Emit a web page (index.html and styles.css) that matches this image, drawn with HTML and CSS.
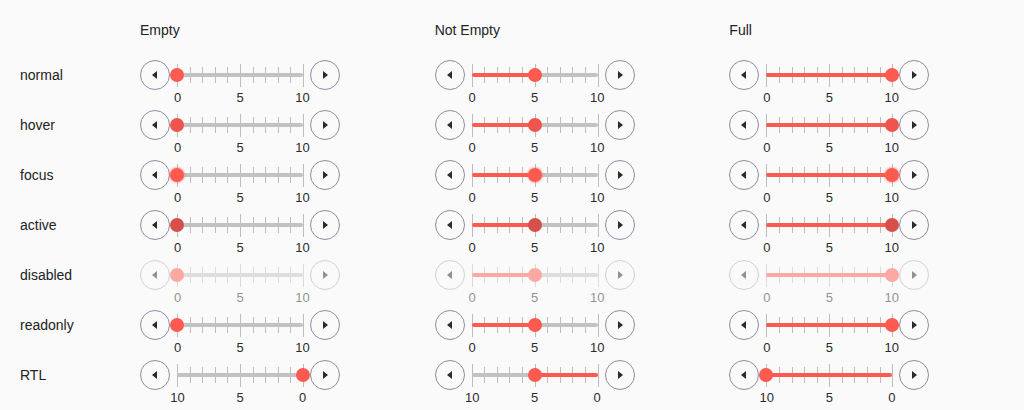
FILE: index.html
```html
<!DOCTYPE html>
<html>
<head>
<meta charset="utf-8">
<link rel="stylesheet" href="styles.css">
</head>
<body>
<div class="page">
  <div class="head"></div>
  <div class="head">Empty</div>
  <div class="head">Not Empty</div>
  <div class="head">Full</div>

  <!-- normal -->
  <div class="label">normal</div>
  <div class="cell"><div class="slider"><button class="btn"><svg viewBox="0 0 10 10"><polygon points="7,1 7,9 2,5"/></svg></button><div class="rail"><div class="ticks"><i class="major"></i><i></i><i></i><i></i><i></i><i class="major"></i><i></i><i></i><i></i><i></i><i class="major"></i></div><div class="track"></div><div class="fill" style="left:0%;width:0%"></div><div class="thumb" style="left:0%"></div><div class="nums"><span>0</span><span>5</span><span>10</span></div></div><button class="btn"><svg viewBox="0 0 10 10"><polygon points="3,1 3,9 8,5"/></svg></button></div></div>
  <div class="cell"><div class="slider"><button class="btn"><svg viewBox="0 0 10 10"><polygon points="7,1 7,9 2,5"/></svg></button><div class="rail"><div class="ticks"><i class="major"></i><i></i><i></i><i></i><i></i><i class="major"></i><i></i><i></i><i></i><i></i><i class="major"></i></div><div class="track"></div><div class="fill" style="left:0%;width:50%"></div><div class="thumb" style="left:50%"></div><div class="nums"><span>0</span><span>5</span><span>10</span></div></div><button class="btn"><svg viewBox="0 0 10 10"><polygon points="3,1 3,9 8,5"/></svg></button></div></div>
  <div class="cell"><div class="slider"><button class="btn"><svg viewBox="0 0 10 10"><polygon points="7,1 7,9 2,5"/></svg></button><div class="rail"><div class="ticks"><i class="major"></i><i></i><i></i><i></i><i></i><i class="major"></i><i></i><i></i><i></i><i></i><i class="major"></i></div><div class="track"></div><div class="fill" style="left:0%;width:100%"></div><div class="thumb" style="left:100%"></div><div class="nums"><span>0</span><span>5</span><span>10</span></div></div><button class="btn"><svg viewBox="0 0 10 10"><polygon points="3,1 3,9 8,5"/></svg></button></div></div>

  <!-- hover -->
  <div class="label">hover</div>
  <div class="cell"><div class="slider hover"><button class="btn"><svg viewBox="0 0 10 10"><polygon points="7,1 7,9 2,5"/></svg></button><div class="rail"><div class="ticks"><i class="major"></i><i></i><i></i><i></i><i></i><i class="major"></i><i></i><i></i><i></i><i></i><i class="major"></i></div><div class="track"></div><div class="fill" style="left:0%;width:0%"></div><div class="thumb" style="left:0%"></div><div class="nums"><span>0</span><span>5</span><span>10</span></div></div><button class="btn"><svg viewBox="0 0 10 10"><polygon points="3,1 3,9 8,5"/></svg></button></div></div>
  <div class="cell"><div class="slider hover"><button class="btn"><svg viewBox="0 0 10 10"><polygon points="7,1 7,9 2,5"/></svg></button><div class="rail"><div class="ticks"><i class="major"></i><i></i><i></i><i></i><i></i><i class="major"></i><i></i><i></i><i></i><i></i><i class="major"></i></div><div class="track"></div><div class="fill" style="left:0%;width:50%"></div><div class="thumb" style="left:50%"></div><div class="nums"><span>0</span><span>5</span><span>10</span></div></div><button class="btn"><svg viewBox="0 0 10 10"><polygon points="3,1 3,9 8,5"/></svg></button></div></div>
  <div class="cell"><div class="slider hover"><button class="btn"><svg viewBox="0 0 10 10"><polygon points="7,1 7,9 2,5"/></svg></button><div class="rail"><div class="ticks"><i class="major"></i><i></i><i></i><i></i><i></i><i class="major"></i><i></i><i></i><i></i><i></i><i class="major"></i></div><div class="track"></div><div class="fill" style="left:0%;width:100%"></div><div class="thumb" style="left:100%"></div><div class="nums"><span>0</span><span>5</span><span>10</span></div></div><button class="btn"><svg viewBox="0 0 10 10"><polygon points="3,1 3,9 8,5"/></svg></button></div></div>

  <!-- focus -->
  <div class="label">focus</div>
  <div class="cell"><div class="slider focus"><button class="btn"><svg viewBox="0 0 10 10"><polygon points="7,1 7,9 2,5"/></svg></button><div class="rail"><div class="ticks"><i class="major"></i><i></i><i></i><i></i><i></i><i class="major"></i><i></i><i></i><i></i><i></i><i class="major"></i></div><div class="track"></div><div class="fill" style="left:0%;width:0%"></div><div class="thumb" style="left:0%"></div><div class="nums"><span>0</span><span>5</span><span>10</span></div></div><button class="btn"><svg viewBox="0 0 10 10"><polygon points="3,1 3,9 8,5"/></svg></button></div></div>
  <div class="cell"><div class="slider focus"><button class="btn"><svg viewBox="0 0 10 10"><polygon points="7,1 7,9 2,5"/></svg></button><div class="rail"><div class="ticks"><i class="major"></i><i></i><i></i><i></i><i></i><i class="major"></i><i></i><i></i><i></i><i></i><i class="major"></i></div><div class="track"></div><div class="fill" style="left:0%;width:50%"></div><div class="thumb" style="left:50%"></div><div class="nums"><span>0</span><span>5</span><span>10</span></div></div><button class="btn"><svg viewBox="0 0 10 10"><polygon points="3,1 3,9 8,5"/></svg></button></div></div>
  <div class="cell"><div class="slider focus"><button class="btn"><svg viewBox="0 0 10 10"><polygon points="7,1 7,9 2,5"/></svg></button><div class="rail"><div class="ticks"><i class="major"></i><i></i><i></i><i></i><i></i><i class="major"></i><i></i><i></i><i></i><i></i><i class="major"></i></div><div class="track"></div><div class="fill" style="left:0%;width:100%"></div><div class="thumb" style="left:100%"></div><div class="nums"><span>0</span><span>5</span><span>10</span></div></div><button class="btn"><svg viewBox="0 0 10 10"><polygon points="3,1 3,9 8,5"/></svg></button></div></div>

  <!-- active -->
  <div class="label">active</div>
  <div class="cell"><div class="slider active"><button class="btn"><svg viewBox="0 0 10 10"><polygon points="7,1 7,9 2,5"/></svg></button><div class="rail"><div class="ticks"><i class="major"></i><i></i><i></i><i></i><i></i><i class="major"></i><i></i><i></i><i></i><i></i><i class="major"></i></div><div class="track"></div><div class="fill" style="left:0%;width:0%"></div><div class="thumb" style="left:0%"></div><div class="nums"><span>0</span><span>5</span><span>10</span></div></div><button class="btn"><svg viewBox="0 0 10 10"><polygon points="3,1 3,9 8,5"/></svg></button></div></div>
  <div class="cell"><div class="slider active"><button class="btn"><svg viewBox="0 0 10 10"><polygon points="7,1 7,9 2,5"/></svg></button><div class="rail"><div class="ticks"><i class="major"></i><i></i><i></i><i></i><i></i><i class="major"></i><i></i><i></i><i></i><i></i><i class="major"></i></div><div class="track"></div><div class="fill" style="left:0%;width:50%"></div><div class="thumb" style="left:50%"></div><div class="nums"><span>0</span><span>5</span><span>10</span></div></div><button class="btn"><svg viewBox="0 0 10 10"><polygon points="3,1 3,9 8,5"/></svg></button></div></div>
  <div class="cell"><div class="slider active"><button class="btn"><svg viewBox="0 0 10 10"><polygon points="7,1 7,9 2,5"/></svg></button><div class="rail"><div class="ticks"><i class="major"></i><i></i><i></i><i></i><i></i><i class="major"></i><i></i><i></i><i></i><i></i><i class="major"></i></div><div class="track"></div><div class="fill" style="left:0%;width:100%"></div><div class="thumb" style="left:100%"></div><div class="nums"><span>0</span><span>5</span><span>10</span></div></div><button class="btn"><svg viewBox="0 0 10 10"><polygon points="3,1 3,9 8,5"/></svg></button></div></div>

  <!-- disabled -->
  <div class="label">disabled</div>
  <div class="cell"><div class="slider disabled"><button class="btn"><svg viewBox="0 0 10 10"><polygon points="7,1 7,9 2,5"/></svg></button><div class="rail"><div class="ticks"><i class="major"></i><i></i><i></i><i></i><i></i><i class="major"></i><i></i><i></i><i></i><i></i><i class="major"></i></div><div class="track"></div><div class="fill" style="left:0%;width:0%"></div><div class="thumb" style="left:0%"></div><div class="nums"><span>0</span><span>5</span><span>10</span></div></div><button class="btn"><svg viewBox="0 0 10 10"><polygon points="3,1 3,9 8,5"/></svg></button></div></div>
  <div class="cell"><div class="slider disabled"><button class="btn"><svg viewBox="0 0 10 10"><polygon points="7,1 7,9 2,5"/></svg></button><div class="rail"><div class="ticks"><i class="major"></i><i></i><i></i><i></i><i></i><i class="major"></i><i></i><i></i><i></i><i></i><i class="major"></i></div><div class="track"></div><div class="fill" style="left:0%;width:50%"></div><div class="thumb" style="left:50%"></div><div class="nums"><span>0</span><span>5</span><span>10</span></div></div><button class="btn"><svg viewBox="0 0 10 10"><polygon points="3,1 3,9 8,5"/></svg></button></div></div>
  <div class="cell"><div class="slider disabled"><button class="btn"><svg viewBox="0 0 10 10"><polygon points="7,1 7,9 2,5"/></svg></button><div class="rail"><div class="ticks"><i class="major"></i><i></i><i></i><i></i><i></i><i class="major"></i><i></i><i></i><i></i><i></i><i class="major"></i></div><div class="track"></div><div class="fill" style="left:0%;width:100%"></div><div class="thumb" style="left:100%"></div><div class="nums"><span>0</span><span>5</span><span>10</span></div></div><button class="btn"><svg viewBox="0 0 10 10"><polygon points="3,1 3,9 8,5"/></svg></button></div></div>

  <!-- readonly -->
  <div class="label">readonly</div>
  <div class="cell"><div class="slider"><button class="btn"><svg viewBox="0 0 10 10"><polygon points="7,1 7,9 2,5"/></svg></button><div class="rail"><div class="ticks"><i class="major"></i><i></i><i></i><i></i><i></i><i class="major"></i><i></i><i></i><i></i><i></i><i class="major"></i></div><div class="track"></div><div class="fill" style="left:0%;width:0%"></div><div class="thumb" style="left:0%"></div><div class="nums"><span>0</span><span>5</span><span>10</span></div></div><button class="btn"><svg viewBox="0 0 10 10"><polygon points="3,1 3,9 8,5"/></svg></button></div></div>
  <div class="cell"><div class="slider"><button class="btn"><svg viewBox="0 0 10 10"><polygon points="7,1 7,9 2,5"/></svg></button><div class="rail"><div class="ticks"><i class="major"></i><i></i><i></i><i></i><i></i><i class="major"></i><i></i><i></i><i></i><i></i><i class="major"></i></div><div class="track"></div><div class="fill" style="left:0%;width:50%"></div><div class="thumb" style="left:50%"></div><div class="nums"><span>0</span><span>5</span><span>10</span></div></div><button class="btn"><svg viewBox="0 0 10 10"><polygon points="3,1 3,9 8,5"/></svg></button></div></div>
  <div class="cell"><div class="slider"><button class="btn"><svg viewBox="0 0 10 10"><polygon points="7,1 7,9 2,5"/></svg></button><div class="rail"><div class="ticks"><i class="major"></i><i></i><i></i><i></i><i></i><i class="major"></i><i></i><i></i><i></i><i></i><i class="major"></i></div><div class="track"></div><div class="fill" style="left:0%;width:100%"></div><div class="thumb" style="left:100%"></div><div class="nums"><span>0</span><span>5</span><span>10</span></div></div><button class="btn"><svg viewBox="0 0 10 10"><polygon points="3,1 3,9 8,5"/></svg></button></div></div>

  <!-- RTL -->
  <div class="label">RTL</div>
  <div class="cell"><div class="slider"><button class="btn"><svg viewBox="0 0 10 10"><polygon points="7,1 7,9 2,5"/></svg></button><div class="rail"><div class="ticks"><i class="major"></i><i></i><i></i><i></i><i></i><i class="major"></i><i></i><i></i><i></i><i></i><i class="major"></i></div><div class="track"></div><div class="fill" style="left:100%;width:0%"></div><div class="thumb" style="left:100%"></div><div class="nums"><span>10</span><span>5</span><span>0</span></div></div><button class="btn"><svg viewBox="0 0 10 10"><polygon points="3,1 3,9 8,5"/></svg></button></div></div>
  <div class="cell"><div class="slider"><button class="btn"><svg viewBox="0 0 10 10"><polygon points="7,1 7,9 2,5"/></svg></button><div class="rail"><div class="ticks"><i class="major"></i><i></i><i></i><i></i><i></i><i class="major"></i><i></i><i></i><i></i><i></i><i class="major"></i></div><div class="track"></div><div class="fill" style="left:50%;width:50%"></div><div class="thumb" style="left:50%"></div><div class="nums"><span>10</span><span>5</span><span>0</span></div></div><button class="btn"><svg viewBox="0 0 10 10"><polygon points="3,1 3,9 8,5"/></svg></button></div></div>
  <div class="cell"><div class="slider"><button class="btn"><svg viewBox="0 0 10 10"><polygon points="7,1 7,9 2,5"/></svg></button><div class="rail"><div class="ticks"><i class="major"></i><i></i><i></i><i></i><i></i><i class="major"></i><i></i><i></i><i></i><i></i><i class="major"></i></div><div class="track"></div><div class="fill" style="left:0%;width:100%"></div><div class="thumb" style="left:0%"></div><div class="nums"><span>10</span><span>5</span><span>0</span></div></div><button class="btn"><svg viewBox="0 0 10 10"><polygon points="3,1 3,9 8,5"/></svg></button></div></div>
</div>
</body>
</html>
```

FILE: styles.css
```css
html, body {
  margin: 0;
  padding: 0;
  background: #fafafa;
}

body {
  font-family: "Liberation Sans", Arial, sans-serif;
  color: #222;
  font-size: 14px;
}

.page {
  display: grid;
  grid-template-columns: 120px repeat(3, 1fr);
  grid-auto-rows: 50px;
  grid-template-rows: 38px;
  padding: 22px 0 0 20px;
}

.head {
  font-size: 14px;
  line-height: 16px;
  align-self: start;
}

.label {
  line-height: 30px;
  font-size: 14px;
}

.cell {
  display: flex;
}

.slider {
  display: flex;
  align-items: flex-start;
}

.btn {
  width: 30px;
  height: 30px;
  border-radius: 50%;
  border: 1px solid #8d8da2;
  background: transparent;
  padding: 0;
  margin: 0;
  display: flex;
  align-items: center;
  justify-content: center;
  flex: none;
}

.btn svg {
  width: 10px;
  height: 10px;
  display: block;
}

.btn polygon {
  fill: #2b2b2b;
}

.rail {
  position: relative;
  width: 126px;
  height: 30px;
  margin: 0 7px;
}

.ticks {
  position: absolute;
  left: 0;
  top: 0;
  width: 127px;
  height: 30px;
  display: flex;
  justify-content: space-between;
  align-items: center;
}

.ticks i {
  display: block;
  width: 1px;
  height: 16px;
  background: #bdbdbd;
}

.ticks i.major {
  height: 23px;
}

.track {
  position: absolute;
  left: 0;
  right: 0;
  top: 13px;
  height: 4px;
  border-radius: 2px;
  background: #c2c2c2;
}

.fill {
  position: absolute;
  top: 13px;
  height: 4px;
  border-radius: 2px;
  background: #ff5a50;
}

.thumb {
  position: absolute;
  top: 8px;
  width: 14px;
  height: 14px;
  margin-left: -7px;
  border-radius: 50%;
  background: #ff5a50;
}

.nums {
  position: absolute;
  top: 30px;
  left: -10px;
  right: -10px;
  display: flex;
  justify-content: space-between;
  font-size: 13px;
  line-height: 16px;
  color: #2b2b2b;
}

.nums span {
  width: 21px;
  text-align: center;
}

.hover .thumb {
  background: #ef554d;
}

.focus .thumb {
  box-shadow: 0 0 2px 1px rgba(255, 90, 80, 0.4);
}

.active .thumb {
  background: #d6504a;
}

.disabled {
  opacity: 0.5;
}

.disabled .btn {
  border-color: #a8a8b8;
}
```
